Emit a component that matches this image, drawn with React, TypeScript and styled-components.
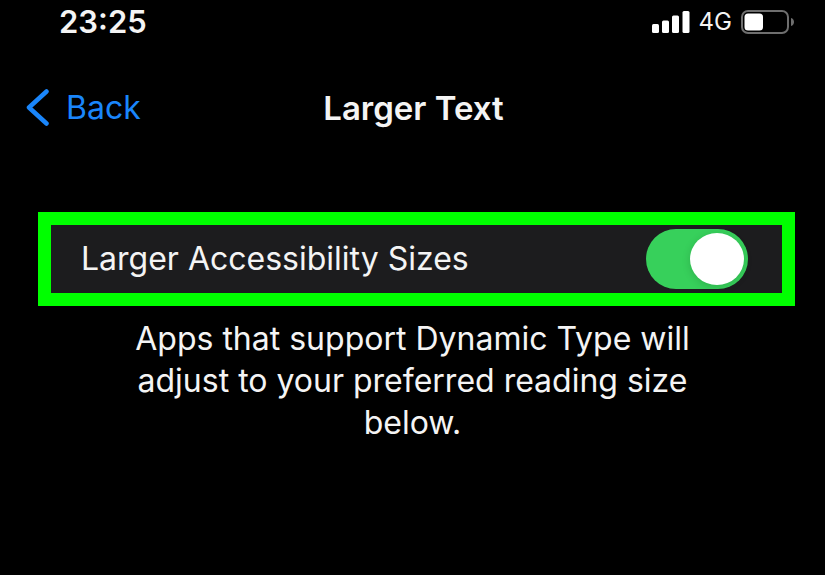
import React, { useState } from "react";
import styled, { createGlobalStyle } from "styled-components";

const GlobalStyle = createGlobalStyle`
  *, *::before, *::after { box-sizing: border-box; }
  body {
    margin: 0;
    background: #000;
    color: #f4f4f4;
    font-family: Inter, "Liberation Sans", sans-serif;
  }
`;

const Screen = styled.div`
  display: flex;
  flex-direction: column;
  min-height: 100vh;
  background: #000;
`;

const StatusBar = styled.header`
  display: flex;
  align-items: center;
  justify-content: space-between;
  height: 44px;
  padding: 0 30px 0 59px;
`;

const Clock = styled.time`
  font-size: 31px;
  font-weight: 600;
  line-height: 40px;
`;

const Indicators = styled.div`
  display: flex;
  align-items: center;
  gap: 9px;
`;

const Network = styled.span`
  font-size: 24px;
  font-weight: 400;
  line-height: 32px;
`;

const NavBar = styled.nav`
  display: grid;
  grid-template-columns: 1fr auto 1fr;
  align-items: center;
  height: 128px;
  padding: 0 22px 0 24px;
`;

const BackLink = styled.a`
  display: inline-flex;
  align-items: center;
  justify-self: start;
  gap: 16px;
  color: #1a86fb;
  font-size: 32px;
  line-height: 40px;
  text-decoration: none;
`;

const Title = styled.h1`
  margin: 0;
  font-size: 33px;
  font-weight: 600;
  line-height: 40px;
`;

const Setting = styled.label`
  display: flex;
  align-items: center;
  justify-content: space-between;
  height: 94px;
  margin: 40px 30px 0 38px;
  padding: 0 34px 0 30px;
  border: 13px solid #0f0;
  background: #1c1c1e;
  font-size: 32px;
  line-height: 40px;
`;

const Switch = styled.input`
  appearance: none;
  display: flex;
  flex: none;
  align-items: center;
  width: 102px;
  height: 60px;
  margin: 0;
  padding: 4px;
  border-radius: 30px;
  background: #39393d;
  cursor: pointer;

  &::before {
    content: "";
    width: 54px;
    height: 52px;
    border-radius: 50%;
    background: #fff;
    box-shadow: 0 2px 8px rgba(0, 0, 0, 0.15);
  }

  &:checked {
    justify-content: flex-end;
    background: #37d05b;
  }
`;

const Note = styled.p`
  max-width: 600px;
  margin: 12px auto 0;
  font-size: 32px;
  line-height: 42px;
  text-align: center;
`;

export default function App() {
  const [larger, setLarger] = useState(true);
  return (
    <Screen>
      <GlobalStyle />
      <StatusBar>
        <Clock>23:25</Clock>
        <Indicators>
          <svg width="38" height="24" viewBox="0 0 38 24" fill="#fff" aria-hidden="true">
            <rect x="0" y="14" width="7" height="9" rx="1.5" />
            <rect x="10" y="10.5" width="7" height="12.5" rx="1.5" />
            <rect x="20" y="5.5" width="7" height="17.5" rx="1.5" />
            <rect x="30.5" y="1" width="7" height="22" rx="1.5" />
          </svg>
          <Network>4G</Network>
          <svg width="54" height="24" viewBox="0 0 54 24" aria-hidden="true">
            <rect x="1" y="1" width="46" height="22" rx="6" fill="none" stroke="#6e6e6e" strokeWidth="2" />
            <rect x="3.5" y="3.5" width="18.5" height="17" rx="3.5" fill="#fff" />
            <path d="M50 8c4 1 4 7 0 8z" fill="#6e6e6e" />
          </svg>
        </Indicators>
      </StatusBar>
      <NavBar>
        <BackLink href="#back">
          <svg width="26" height="38" viewBox="0 0 26 38" fill="none" aria-hidden="true">
            <path d="M22.5 2.500 5 18.500l17.500 16" stroke="#1a86fb" strokeWidth="4.500" strokeLinecap="round" strokeLinejoin="round" />
          </svg>
          Back
        </BackLink>
        <Title>Larger Text</Title>
      </NavBar>
      <main>
        <Setting>
          Larger Accessibility Sizes
          <Switch type="checkbox" role="switch" checked={larger} onChange={(e) => setLarger(e.target.checked)} />
        </Setting>
        <Note>Apps that support Dynamic Type will adjust to your preferred reading size below.</Note>
      </main>
    </Screen>
  );
}
